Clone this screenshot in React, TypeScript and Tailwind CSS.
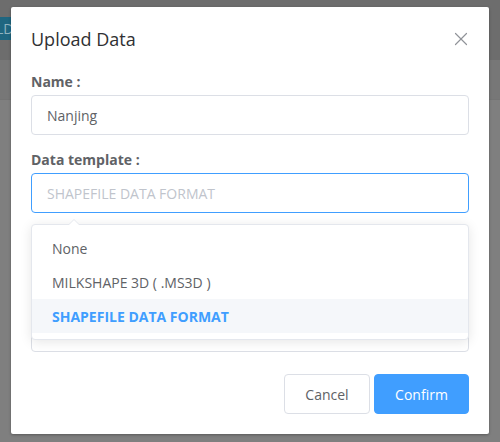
import { X } from "lucide-react";

const font = { fontFamily: '"Open Sans", "Noto Sans", sans-serif' };

export default function App() {
  return (
    <div className="relative h-[442px] w-[500px] overflow-hidden bg-[#7f7f7f]" style={font}>
      {/* page behind the overlay */}
      <div className="flex h-[60px] items-start bg-[#6d6d6d] pt-[17px]">
        <div className="flex h-[23px] w-[11px] items-center overflow-hidden bg-[#1f6680] text-[14px] leading-none text-[#8fb3bf]">
          <span className="-ml-[4px]">LD</span>
        </div>
      </div>
      <div className="h-[40px] border-b border-[#747474] bg-[#777777]" />

      {/* dialog */}
      <div className="absolute left-[11px] top-[7px] h-[427px] w-[478px] rounded-[2px] bg-white shadow-[0_1px_3px_rgba(0,0,0,0.3)]">
        <div className="flex items-center justify-between px-5 pb-[10px] pt-5">
          <span className="text-[18px] leading-6 text-[#303133]">Upload Data</span>
          <X className="-mr-[3px] size-[22px] text-[#909399]" strokeWidth={1.3} />
        </div>

        <div className="px-5 pt-[10px]">
          <div className="text-[14px] font-bold leading-[22px] text-[#606266]">Name :</div>
          <div className="mt-[2px] flex h-10 items-center rounded-[4px] border border-[#dcdfe6] px-[15px] text-[14px] text-[#606266]">
            Nanjing
          </div>

          <div className="mt-[14px] text-[14px] font-bold leading-[22px] text-[#606266]">Data template :</div>
          <div className="relative mt-[2px]">
            <div className="flex h-10 items-center rounded-[4px] border border-[#409eff] px-[15px] text-[14px] text-[#c0c4cc]">
              SHAPEFILE DATA FORMAT
            </div>

            {/* next field, hidden under the open dropdown */}
            <div className="mt-[38px] h-[101px] rounded-[4px] border border-[#dcdfe6]" />

            {/* dropdown */}
            <div className="absolute left-0 right-0 top-[51px] z-10 rounded-[4px] border border-[#e4e7ed] bg-white py-[6px] shadow-[0_2px_12px_rgba(0,0,0,0.1)]">
              <div className="absolute -top-[6px] left-[36px] h-0 w-0 border-x-[6px] border-b-[6px] border-x-transparent border-b-[#e4e7ed]" />
              <div className="absolute -top-[5px] left-[37px] h-0 w-0 border-x-[5px] border-b-[5px] border-x-transparent border-b-white" />
              <div className="flex h-[34px] items-center px-5 text-[14px] text-[#606266]">None</div>
              <div className="flex h-[34px] items-center px-5 text-[14px] text-[#606266]">MILKSHAPE 3D ( .MS3D )</div>
              <div className="flex h-[34px] items-center bg-[#f5f7fa] px-5 text-[14px] font-bold text-[#409eff]">
                SHAPEFILE DATA FORMAT
              </div>
            </div>
          </div>
        </div>

        <div className="absolute bottom-5 right-5 flex gap-[4px]">
          <button className="h-10 w-[86px] rounded-[4px] border border-[#dcdfe6] bg-white text-[14px] text-[#606266]">
            Cancel
          </button>
          <button className="h-10 w-[95px] rounded-[4px] border border-[#409eff] bg-[#409eff] text-[14px] text-white">
            Confirm
          </button>
        </div>
      </div>
    </div>
  );
}
